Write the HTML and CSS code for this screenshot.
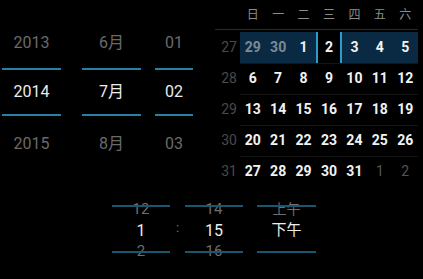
FILE: index.html
```html
<!DOCTYPE html>
<html>
  <head>
    <meta charset="utf-8">
    <title>Date and time picker</title>
    <link rel="stylesheet" href="styles.css">
  </head>
  <body>
    <div class="screen">
      <div class="top">
        <div class="spinners">
          <div class="spin year">
            <div class="cell prev">2013</div>
            <div class="cell cur">2014</div>
            <div class="cell next">2015</div>
          </div>
          <div class="spin month">
            <div class="cell prev">6月</div>
            <div class="cell cur">7月</div>
            <div class="cell next">8月</div>
          </div>
          <div class="spin day">
            <div class="cell prev">01</div>
            <div class="cell cur">02</div>
            <div class="cell next">03</div>
          </div>
        </div>
        <div class="calendar">
          <div class="cal-head">
            <span></span><span>日</span><span>一</span><span>二</span><span>三</span><span>四</span><span>五</span><span>六</span>
          </div>
          <div class="week sel">
            <span class="wk">27</span>
            <span class="d prev">29</span><span class="d prev">30</span><span class="d">1</span>
            <span class="d today">2</span>
            <span class="d">3</span><span class="d">4</span><span class="d">5</span>
          </div>
          <div class="week">
            <span class="wk">28</span>
            <span class="d">6</span><span class="d">7</span><span class="d">8</span><span class="d">9</span><span class="d">10</span><span class="d">11</span><span class="d">12</span>
          </div>
          <div class="week">
            <span class="wk">29</span>
            <span class="d">13</span><span class="d">14</span><span class="d">15</span><span class="d">16</span><span class="d">17</span><span class="d">18</span><span class="d">19</span>
          </div>
          <div class="week">
            <span class="wk">30</span>
            <span class="d">20</span><span class="d">21</span><span class="d">22</span><span class="d">23</span><span class="d">24</span><span class="d">25</span><span class="d">26</span>
          </div>
          <div class="week">
            <span class="wk">31</span>
            <span class="d">27</span><span class="d">28</span><span class="d">29</span><span class="d">30</span><span class="d">31</span><span class="d next">1</span><span class="d next">2</span>
          </div>
        </div>
      </div>
      <div class="time">
        <div class="tcol hour">
          <div class="trow dim">12</div>
          <div class="trow cur">1</div>
          <div class="trow dim">2</div>
        </div>
        <div class="colon">:</div>
        <div class="tcol minute">
          <div class="trow dim">14</div>
          <div class="trow cur">15</div>
          <div class="trow dim">16</div>
        </div>
        <div class="tgap"></div>
        <div class="tcol ampm">
          <div class="trow dim">上午</div>
          <div class="trow cur">下午</div>
          <div class="trow"></div>
        </div>
      </div>
    </div>
  </body>
</html>
```

FILE: styles.css
```css
body {
  margin: 0;
  background: #000;
  font-family: Roboto, "Noto Sans CJK SC", sans-serif;
  color: #f0f0f0;
}
.screen {
  width: 423px;
  height: 279px;
  overflow: hidden;
}
.top {
  display: flex;
  height: 187px;
}

/* date spinners */
.spinners {
  width: 210px;
  padding-left: 2px;
  padding-top: 18px;
  display: flex;
}
.spin {
  text-align: center;
  font-size: 16px;
}
.spin.year { width: 59px; margin-right: 21px; }
.spin.month { width: 59px; margin-right: 14px; }
.spin.day { width: 38px; }
.spin .cell.prev {
  height: 50px;
  line-height: 50px;
  color: #6a6a6a;
}
.spin .cell.cur {
  height: 44px;
  line-height: 44px;
  border-top: 2px solid #2582a5;
  border-bottom: 2px solid #2582a5;
  color: #ececec;
}
.spin .cell.next {
  height: 55px;
  line-height: 55px;
  color: #6a6a6a;
}

/* calendar */
.calendar {
  width: 211px;
}
.cal-head,
.week {
  display: grid;
  grid-template-columns: 28px repeat(7, 25.43px);
}
.cal-head {
  height: 29px;
  line-height: 30px;
  font-size: 12px;
  color: #8c8c8c;
  text-align: center;
  border-bottom: 1px solid #2a2a2a;
  margin: 0 5px 2px 3px;
  grid-template-columns: 25px repeat(7, 25.43px);
}
.week {
  height: 31px;
  line-height: 31px;
  text-align: center;
  font-size: 14px;
}
.week .wk {
  color: #4a4a4a;
  padding-left: 6px;
}
.week .d {
  font-weight: bold;
  color: #f2f2f2;
  border-top: 1px solid #141414;
  line-height: 29px;
}
.week.sel .d {
  border-top: 0;
  line-height: 31px;
  background: #092a42;
}
.week.sel .d.prev {
  color: #7d8a96;
}
.week.sel .d.today {
  background: #000;
  border-left: 2px solid #2a9ccc;
  border-right: 2px solid #2a9ccc;
}
.week .d.next {
  color: #555;
  font-weight: normal;
}

/* time spinners */
.time {
  margin-top: 15px;
  height: 58px;
  overflow: hidden;
  display: flex;
  padding-left: 112px;
}
.tcol {
  position: relative;
  text-align: center;
  font-size: 15px;
  margin-top: -3px;
}
.tcol::before,
.tcol::after {
  content: "";
  position: absolute;
  left: 0;
  right: 0;
  height: 2px;
  background: #1a5670;
}
.tcol::before { top: 6px; }
.tcol::after { top: 52px; }
.tcol.hour { width: 58px; }
.tcol.minute { width: 58px; }
.tcol.ampm { width: 59px; font-size: 14px; }
.trow {
  height: 21px;
  line-height: 21px;
}
.trow.cur { color: #ededed; font-size: 16px; }
.trow.dim { color: #6e6e6e; }
.tcol.ampm .trow.cur { font-size: 15px; }
.colon {
  width: 15px;
  text-align: center;
  color: #777;
  font-size: 13px;
  line-height: 52px;
}
.tgap { width: 14px; }
```
